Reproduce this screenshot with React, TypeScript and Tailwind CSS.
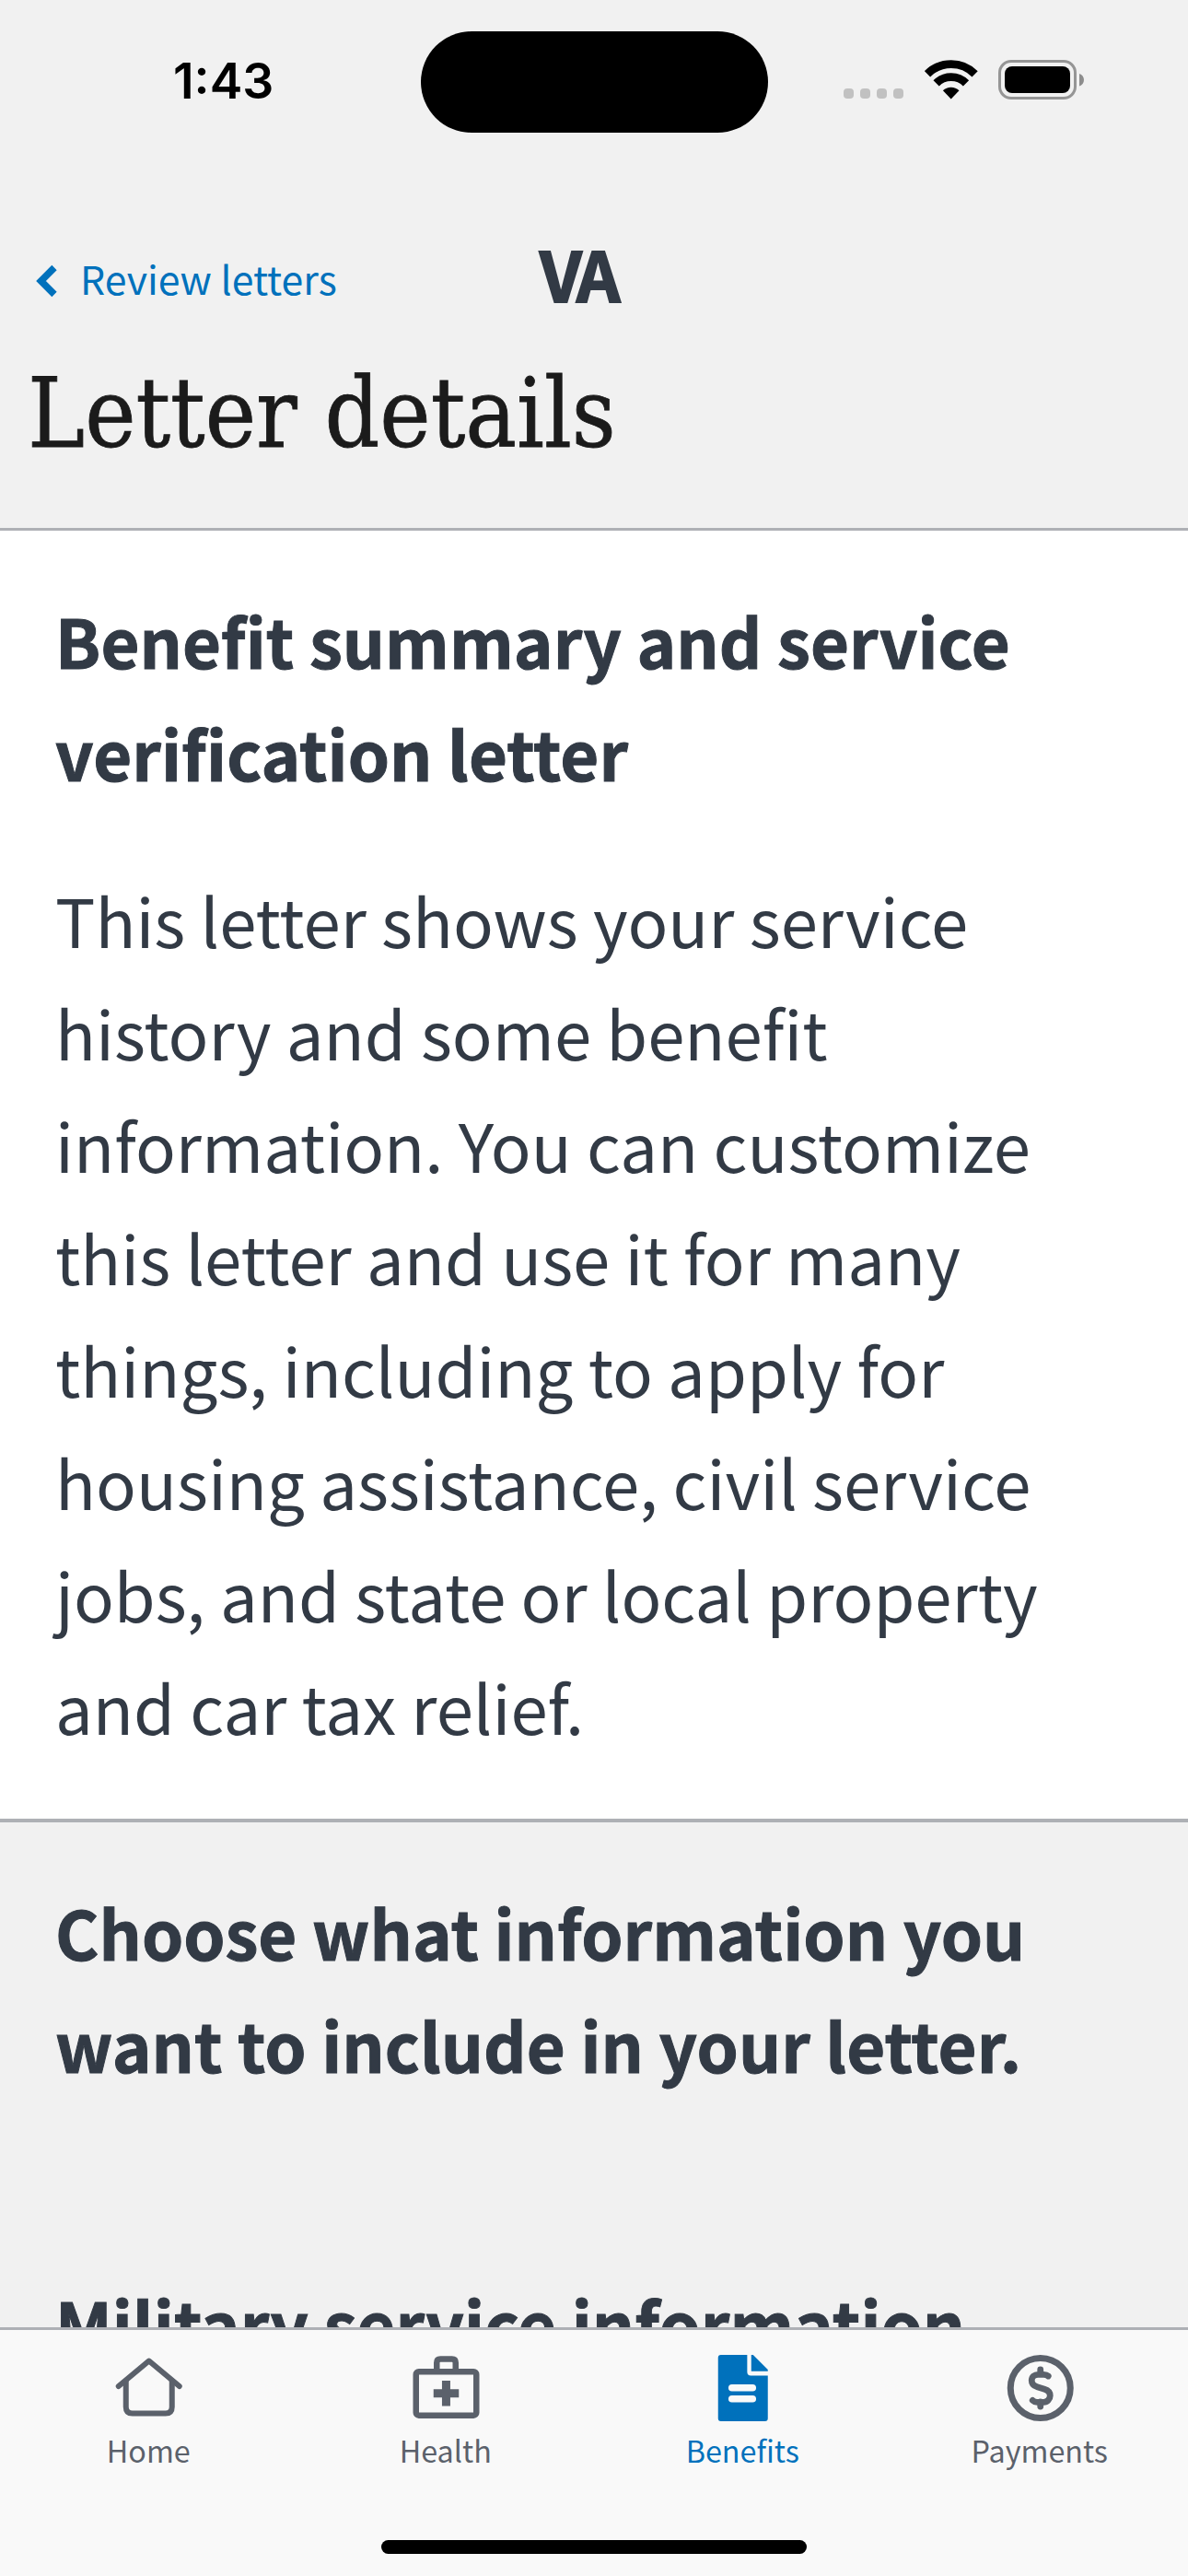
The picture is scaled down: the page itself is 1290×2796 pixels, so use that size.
import type { ReactNode } from "react";

function StatusBar() {
  return (
    <div className="flex h-[177px] shrink-0">
      <div className="w-[457px] shrink-0 pt-[56px] pl-[188px] font-[Inter,sans-serif] text-[53.500px] leading-[64px] font-semibold text-black">
        1:43
      </div>
      <div className="mt-[34px] h-[110px] w-[377px] shrink-0 rounded-full bg-black" />
      <div className="flex pt-[65px] pl-[82px]">
        <div className="mt-[31px] flex h-[11px] gap-[7px]">
          {[0, 1, 2, 3].map((i) => (
            <span key={i} className="h-[11px] w-[11px] rounded-[4px] bg-[#c1c1c1]" />
          ))}
        </div>
        <svg className="ml-[23px] h-[43px] w-[58px]" viewBox="0 0 58 43" fill="none">
          <path d="M3 15.3a36.5 36.5 0 0 1 51.600 0" stroke="#000" strokeWidth="8.8" />
          <path d="M12.6 25.3a22.800 22.800 0 0 1 32.400 0" stroke="#000" strokeWidth="8.8" />
          <path d="M28.700 42.500l-8.800-9.200a12.400 12.400 0 0 1 17.600 0z" fill="#000" />
        </svg>
        <svg className="ml-[22px] h-[44px] w-[95px]" viewBox="0 0 95 44" fill="none">
          <rect x="1.5" y="1.5" width="82" height="40" rx="12.500" stroke="#959595" strokeWidth="3" />
          <rect x="7" y="7" width="71" height="29" rx="8" fill="#000" />
          <path d="M88 15c3 1 5 3.600 5 6.700s-2 5.700-5 6.700z" fill="#8d8d8d" />
        </svg>
      </div>
    </div>
  );
}

function Header() {
  return (
    <header className="h-[399px] shrink-0 border-b-[3px] border-[#aeb0b5]">
      <div className="grid h-[190px] grid-cols-[584px_1fr]">
        <div className="flex pl-[39px] text-[#0071bc]">
          <svg className="mt-[109px] h-[38px] w-[24px]" viewBox="0 0 24 38" fill="none">
            <path d="M20 4.500L5.500 19L20 33.500" stroke="currentColor" strokeWidth="7.500" />
          </svg>
          <span className="mt-[92px] ml-[24px] text-[42.8px] leading-[64px] whitespace-nowrap">Review letters</span>
        </div>
        <span className="mt-[69px] ml-[2px] text-[74px] leading-[100px] font-bold tracking-[-4.500px] text-[#323a45] [-webkit-text-stroke:2px_#323a45]">
          VA
        </span>
      </div>
      <h1 className="pt-[12px] pl-[30px] font-['DejaVu_Serif_Condensed','DejaVu_Serif',serif] text-[104px] leading-[140px] whitespace-nowrap text-[#1b1b1b] [-webkit-text-stroke:0.8px_#1b1b1b]">
        Letter details
      </h1>
    </header>
  );
}

function Tab({ label, active, children }: { label: string; active?: boolean; children: ReactNode }) {
  return (
    <div className={active ? "flex flex-col items-center text-[#0071bc]" : "flex flex-col items-center text-[#5b616b]"}>
      <svg className="mt-[27px] h-[72px] w-[72px] overflow-visible" viewBox="-0.75 0 72 72" fill="none">
        {children}
      </svg>
      <span className="mt-[6px] text-[32.3px] leading-[50px]">{label}</span>
    </div>
  );
}

function TabBar() {
  return (
    <nav className="flex h-[270px] shrink-0 flex-col border-t-[3px] border-[#aeb0b5] bg-[#f9f9f9]">
      <div className="grid h-[228px] grid-cols-4">
        <Tab label="Home">
          <path d="M3 34L36 6.500l33 27.500" stroke="currentColor" strokeWidth="6" strokeLinecap="round" strokeLinejoin="round" />
          <path d="M11 28v28.500q0 7 7 7h36q7 0 7-7V28" stroke="currentColor" strokeWidth="6" />
        </Tab>
        <Tab label="Health">
          <rect x="3" y="18.200" width="65.500" height="47.500" rx="3" stroke="currentColor" strokeWidth="6.500" />
          <path d="M25.500 18V8.500q0-4 4-4h12.500q4 0 4 4V18" stroke="currentColor" strokeWidth="6.500" />
          <path d="M35.700 28v27.500M22 41.800h27.500" stroke="currentColor" strokeWidth="9" />
        </Tab>
        <Tab label="Benefits" active>
          <path d="M12 0h28.600v18.400q0 4 4 4H63V69q0 3-3 3H12q-3 0-3-3V3q0-3 3-3z" fill="currentColor" />
          <path d="M45 0h2L63 16v1.700H45z" fill="currentColor" />
          <path d="M24 35.800h22.500M24 47.800h22.500" stroke="#f9f9f9" strokeWidth="7.600" strokeLinecap="round" />
        </Tab>
        <Tab label="Payments">
          <circle cx="36" cy="36" r="32.500" stroke="currentColor" strokeWidth="7" />
          <path
            d="M44.500 23c-1.500-1.500-3-1.700-5-1.700h-6c-4 0-7 2.500-7 6.500s2.500 6 6 7l8 2.500c4 1.200 6 3.500 6 7s-3 7-7 7h-7c-2 0-3.500-.5-5-2M36 16v5M36 51v5"
            stroke="currentColor"
            strokeWidth="6.800"
            strokeLinecap="round"
          />
        </Tab>
      </div>
      <div className="mx-auto h-[15px] w-[462px] rounded-full bg-black" />
    </nav>
  );
}

export default function App() {
  return (
    <div className="flex h-[2796px] w-[1290px] flex-col overflow-hidden bg-[#f1f1f1] font-['Noto_Sans_CJK_JP','Noto_Sans',sans-serif]">
      <StatusBar />
      <Header />
      <main className="min-h-0 flex-1 overflow-hidden text-[72.4px] leading-[122px] text-[#323a45]">
        <section className="h-[1402px] border-b-[4px] border-[#aeb0b5] bg-white pt-[58px] pl-[60px]">
          <h2 className="font-bold tracking-[0.08px] whitespace-nowrap [-webkit-text-stroke:1px_#323a45]">
            Benefit summary and service
            <br />
            verification letter
          </h2>
          <p className="mt-[59px] text-[72.500px] whitespace-nowrap">
            This letter shows your service
            <br />
            history and some benefit
            <br />
            information. You can customize
            <br />
            this letter and use it for many
            <br />
            things, including to apply for
            <br />
            housing assistance, civil service
            <br />
            jobs, and state or local property
            <br />
            and car tax relief.
          </p>
        </section>
        <section className="pt-[58px] pl-[60px] font-bold tracking-[0.08px] whitespace-nowrap [-webkit-text-stroke:1px_#323a45]">
          <h2>
            Choose what information you
            <br />
            want to include in your letter.
          </h2>
          <h3 className="mt-[181px]">Military service information</h3>
        </section>
      </main>
      <TabBar />
    </div>
  );
}
